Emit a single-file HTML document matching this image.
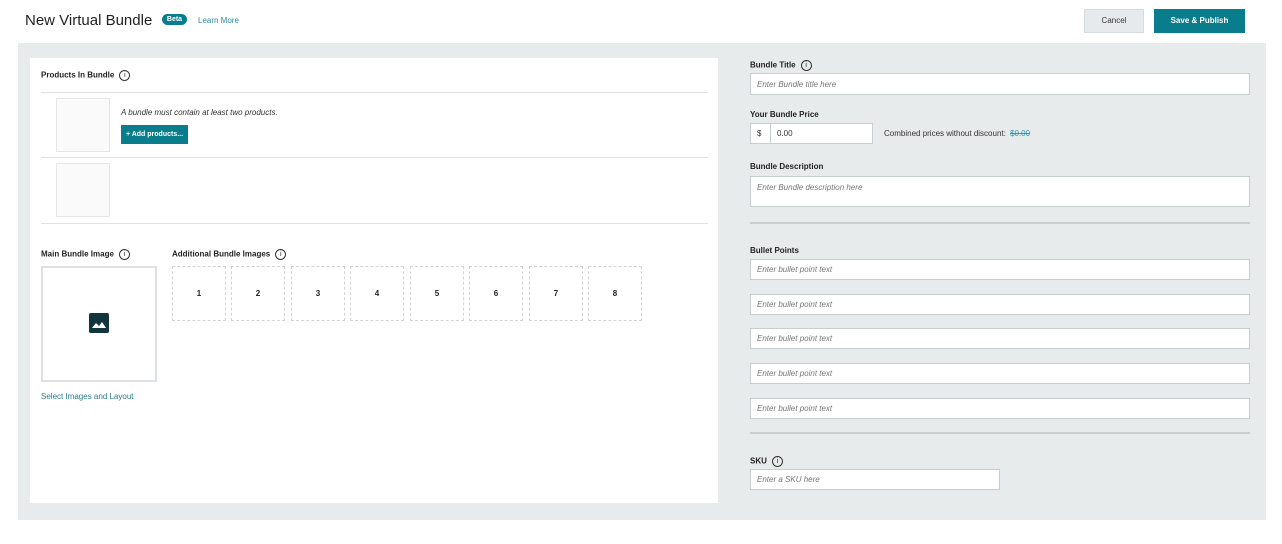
<!DOCTYPE html>
<html><head><style>
*{box-sizing:border-box;margin:0;padding:0}
body{width:1282px;height:544px;background:#fff;font-family:"Liberation Sans",sans-serif;position:relative;overflow:hidden;color:#222}
.a{position:absolute}
.lbl{font-size:8px;font-weight:bold;color:#222}
.inp{position:absolute;background:#fff;border:1px solid #c8cdcf;font-size:8px;font-style:italic;color:#777;padding-left:6px;display:flex;align-items:center}
.info{display:inline-block;width:11px;height:11px;border:1px solid #333;border-radius:50%;font-size:7px;text-align:center;line-height:9px;font-weight:normal;vertical-align:middle;margin-left:5px}
.box{position:absolute;top:266px;width:54px;height:55px;border:1px dashed #d4d4d4;font-size:8px;font-weight:bold;display:flex;align-items:center;justify-content:center}
.hr{position:absolute;height:1px;background:#e2e2e2}
</style></head><body>
<div class="a" style="left:25px;top:12px;font-size:15px;color:#222">New Virtual Bundle</div>
<div class="a" style="left:162px;top:14px;width:25px;height:11px;background:#0a7d8c;border-radius:6px;color:#fff;font-size:7px;font-weight:bold;text-align:center;line-height:11px">Beta</div>
<div class="a" style="left:198px;top:16px;font-size:8px;color:#2b8a9a">Learn More</div>
<div class="a" style="left:1084px;top:9px;width:60px;height:24px;background:#e6eaec;border:1px solid #d6dbdd;font-size:8px;text-align:center;line-height:22px;color:#333">Cancel</div>
<div class="a" style="left:1154px;top:9px;width:91px;height:24px;background:#0a7d8c;font-size:8px;font-weight:bold;text-align:center;line-height:24px;color:#fff">Save &amp; Publish</div>

<div class="a" style="left:18px;top:43px;width:1248px;height:477px;background:#e8ebec"></div>
<div class="a" style="left:30px;top:58px;width:688px;height:445px;background:#fff"></div>

<div class="a lbl" style="left:41px;top:70px">Products In Bundle<span class="info">i</span></div>
<div class="hr" style="left:41px;top:92px;width:667px"></div>
<div class="a" style="left:56px;top:98px;width:54px;height:54px;border:1px solid #e6e6e6;background:#fafafa"></div>
<div class="a" style="left:121px;top:108px;font-size:8px;font-style:italic;color:#333">A bundle must contain at least two products.</div>
<div class="a" style="left:121px;top:125px;width:67px;height:19px;background:#0a7d8c;color:#fff;font-size:7px;font-weight:bold;text-align:center;line-height:19px">+ Add products...</div>
<div class="hr" style="left:41px;top:157px;width:667px"></div>
<div class="a" style="left:56px;top:163px;width:54px;height:54px;border:1px solid #e6e6e6;background:#fafafa"></div>
<div class="hr" style="left:41px;top:223px;width:667px"></div>

<div class="a lbl" style="left:41px;top:249px">Main Bundle Image<span class="info">i</span></div>
<div class="a lbl" style="left:172px;top:249px">Additional Bundle Images<span class="info">i</span></div>
<div class="a" style="left:41px;top:266px;width:116px;height:116px;border:2px solid #dde1e3"></div>
<svg class="a" style="left:89px;top:313px" width="20" height="20" viewBox="0 0 20 20"><rect width="20" height="20" rx="2" fill="#12343b"/><path d="M3 15 L7 10 L10 13 L13 9 L17 15 Z" fill="#fff"/></svg>
<div class="a" style="left:41px;top:392px;font-size:8px;color:#2b7d8c">Select Images and Layout</div>
<div class="box" style="left:172px">1</div>
<div class="box" style="left:231px">2</div>
<div class="box" style="left:291px">3</div>
<div class="box" style="left:350px">4</div>
<div class="box" style="left:410px">5</div>
<div class="box" style="left:469px">6</div>
<div class="box" style="left:529px">7</div>
<div class="box" style="left:588px">8</div>

<div class="a lbl" style="left:750px;top:60px">Bundle Title<span class="info">i</span></div>
<div class="inp" style="left:750px;top:73px;width:500px;height:22px">Enter Bundle title here</div>
<div class="a lbl" style="left:750px;top:110px">Your Bundle Price</div>
<div class="inp" style="left:750px;top:123px;width:21px;height:21px;font-style:normal;color:#333">$</div>
<div class="inp" style="left:770px;top:123px;width:103px;height:21px;font-style:normal;color:#333">0.00</div>
<div class="a" style="left:884px;top:129px;font-size:8px;color:#333">Combined prices without discount: <span style="color:#2b9ab0;text-decoration:line-through;margin-left:2px">$0.00</span></div>
<div class="a lbl" style="left:750px;top:162px">Bundle Description</div>
<div class="inp" style="left:750px;top:176px;width:500px;height:31px;align-items:flex-start;padding-top:6px">Enter Bundle description here</div>
<div class="a" style="left:750px;top:222px;width:500px;height:2px;background:#c9cecf"></div>
<div class="a lbl" style="left:750px;top:246px">Bullet Points</div>
<div class="inp" style="left:750px;top:259px;width:500px;height:21px">Enter bullet point text</div>
<div class="inp" style="left:750px;top:294px;width:500px;height:21px">Enter bullet point text</div>
<div class="inp" style="left:750px;top:328px;width:500px;height:21px">Enter bullet point text</div>
<div class="inp" style="left:750px;top:363px;width:500px;height:21px">Enter bullet point text</div>
<div class="inp" style="left:750px;top:398px;width:500px;height:21px">Enter bullet point text</div>
<div class="a" style="left:750px;top:432px;width:500px;height:2px;background:#c9cecf"></div>
<div class="a lbl" style="left:750px;top:456px">SKU<span class="info">i</span></div>
<div class="inp" style="left:750px;top:469px;width:250px;height:21px">Enter a SKU here</div>
</body></html>
